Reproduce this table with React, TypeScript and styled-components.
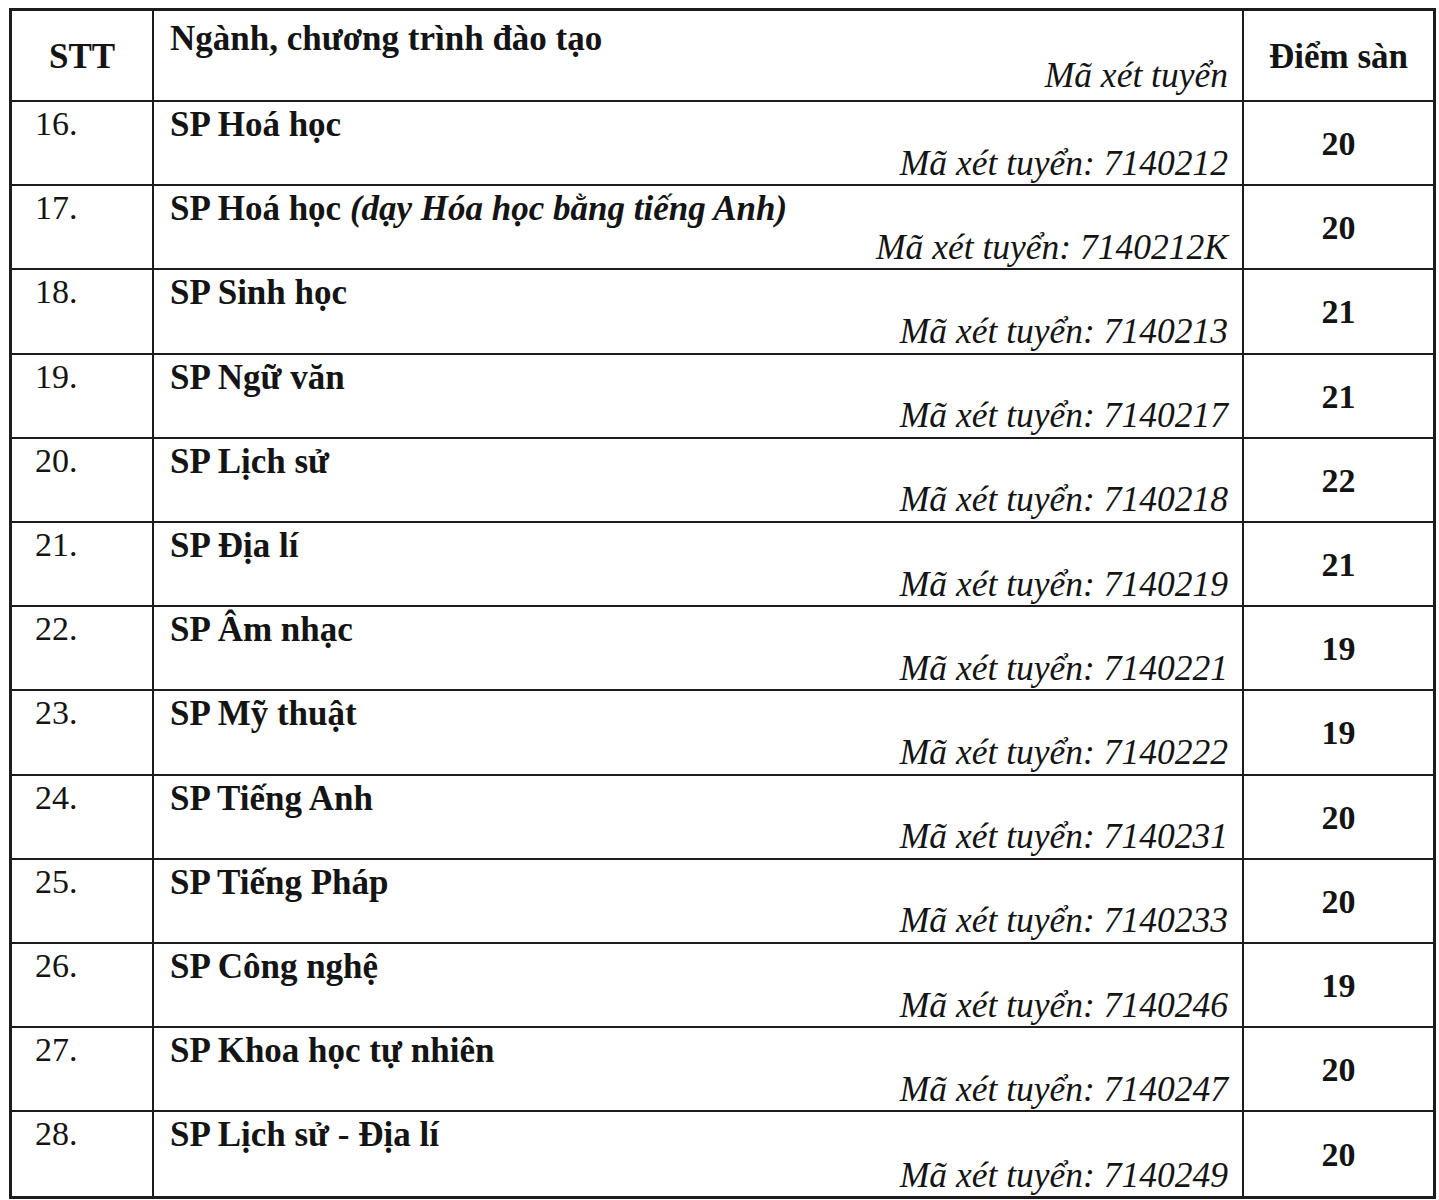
import React from 'react';
import styled, { createGlobalStyle } from 'styled-components';

const GlobalStyle = createGlobalStyle`
  html, body {
    margin: 0;
    padding: 0;
    background: #ffffff;
  }
  body {
    font-family: "Liberation Serif", "Times New Roman", serif;
    color: #141414;
  }
  * {
    box-sizing: border-box;
  }
`;

const Table = styled.div`
  display: grid;
  grid-template-columns: 142px 1090px 189px;
  grid-template-rows: 91px;
  grid-auto-rows: 84.2px;
  width: 1427px;
  margin: 8px 0 0 9px;
  border: 3px solid #1c1c1c;
`;

const Cell = styled.div<{ $lastCol?: boolean; $lastRow?: boolean }>`
  border-right: ${(p) => (p.$lastCol ? 'none' : '2px solid #1c1c1c')};
  border-bottom: ${(p) => (p.$lastRow ? 'none' : '2px solid #1c1c1c')};
  line-height: 1;
  overflow: hidden;
`;

const HeadCenter = styled(Cell)`
  display: flex;
  align-items: center;
  justify-content: center;
  font-weight: bold;
  font-size: 35px;
  padding-top: 2px;
`;

const HeadName = styled(Cell)`
  display: flex;
  flex-direction: column;
  justify-content: space-between;
  padding: 10px 14px 7px 16px;
`;

const NumCell = styled(Cell)`
  font-size: 34px;
  padding: 5px 0 0 23px;
`;

const NameCell = styled(Cell)`
  display: flex;
  flex-direction: column;
  justify-content: space-between;
  padding: 5px 14px 3px 16px;
`;

const ScoreCell = styled(Cell)`
  display: flex;
  align-items: center;
  justify-content: center;
  font-weight: bold;
  font-size: 34px;
  padding-top: 2px;
`;

const Name = styled.div`
  font-weight: bold;
  font-size: 35px;
  white-space: nowrap;

  em {
    font-style: italic;
  }
`;

const Code = styled.div`
  align-self: flex-end;
  font-style: italic;
  font-size: 35.5px;
  white-space: nowrap;
`;

interface Program {
  no: number;
  name: string;
  note?: string;
  code: string;
  score: number;
}

const programs: Program[] = [
  { no: 16, name: 'SP Hoá học', code: '7140212', score: 20 },
  { no: 17, name: 'SP Hoá học', note: '(dạy Hóa học bằng tiếng Anh)', code: '7140212K', score: 20 },
  { no: 18, name: 'SP Sinh học', code: '7140213', score: 21 },
  { no: 19, name: 'SP Ngữ văn', code: '7140217', score: 21 },
  { no: 20, name: 'SP Lịch sử', code: '7140218', score: 22 },
  { no: 21, name: 'SP Địa lí', code: '7140219', score: 21 },
  { no: 22, name: 'SP Âm nhạc', code: '7140221', score: 19 },
  { no: 23, name: 'SP Mỹ thuật', code: '7140222', score: 19 },
  { no: 24, name: 'SP Tiếng Anh', code: '7140231', score: 20 },
  { no: 25, name: 'SP Tiếng Pháp', code: '7140233', score: 20 },
  { no: 26, name: 'SP Công nghệ', code: '7140246', score: 19 },
  { no: 27, name: 'SP Khoa học tự nhiên', code: '7140247', score: 20 },
  { no: 28, name: 'SP Lịch sử - Địa lí', code: '7140249', score: 20 },
];

export default function App() {
  return (
    <>
      <GlobalStyle />
      <Table>
        <HeadCenter>STT</HeadCenter>
        <HeadName>
          <Name>Ngành, chương trình đào tạo</Name>
          <Code>Mã xét tuyển</Code>
        </HeadName>
        <HeadCenter $lastCol>Điểm sàn</HeadCenter>

        {programs.map((p, i) => {
          const last = i === programs.length - 1;
          return (
            <React.Fragment key={p.no}>
              <NumCell $lastRow={last}>{p.no}.</NumCell>
              <NameCell $lastRow={last}>
                <Name>
                  {p.name}
                  {p.note && <em> {p.note}</em>}
                </Name>
                <Code>Mã xét tuyển: {p.code}</Code>
              </NameCell>
              <ScoreCell $lastRow={last} $lastCol>
                {p.score}
              </ScoreCell>
            </React.Fragment>
          );
        })}
      </Table>
    </>
  );
}
